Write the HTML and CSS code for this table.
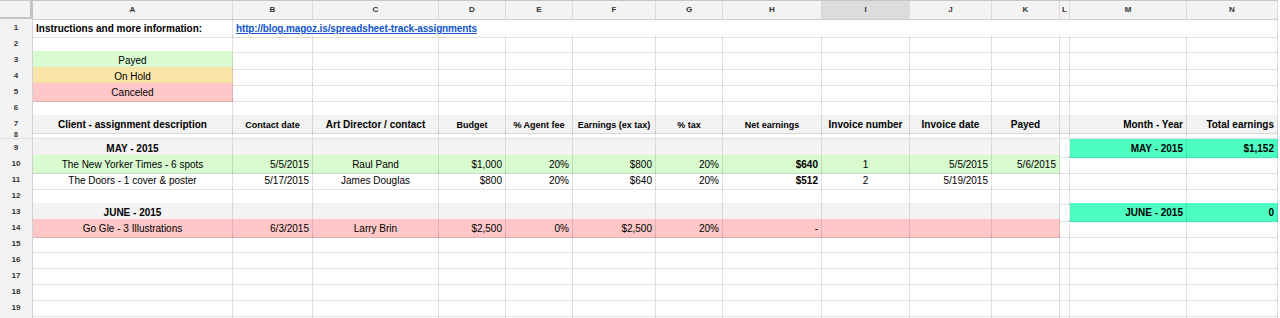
FILE: index.html
```html
<!DOCTYPE html>
<html>
<head>
<meta charset="utf-8">
<link rel="stylesheet" href="styles.css">
</head>
<body>
<div class="sheet">
  <div class="row hdr">
    <div class="corner"></div>
    <div class="ch">A</div><div class="ch">B</div><div class="ch">C</div><div class="ch">D</div><div class="ch">E</div><div class="ch">F</div><div class="ch">G</div><div class="ch">H</div><div class="ch sel">I</div><div class="ch">J</div><div class="ch">K</div><div class="ch">L</div><div class="ch">M</div><div class="ch">N</div>
  </div>

  <div class="row">
    <div class="rh">1</div>
    <div class="c b">Instructions and more information:</div>
    <div class="c span-rest"><a class="link" href="#">http://blog.magoz.is/spreadsheet-track-assignments</a></div>
  </div>

  <div class="row">
    <div class="rh">2</div>
    <div class="c"></div><div class="c"></div><div class="c"></div><div class="c"></div><div class="c"></div><div class="c"></div><div class="c"></div><div class="c"></div><div class="c"></div><div class="c"></div><div class="c"></div><div class="c"></div><div class="c"></div><div class="c"></div>
  </div>

  <div class="row">
    <div class="rh">3</div>
    <div class="c ctr ok">Payed</div><div class="c"></div><div class="c"></div><div class="c"></div><div class="c"></div><div class="c"></div><div class="c"></div><div class="c"></div><div class="c"></div><div class="c"></div><div class="c"></div><div class="c"></div><div class="c"></div><div class="c"></div>
  </div>

  <div class="row">
    <div class="rh">4</div>
    <div class="c ctr hold">On Hold</div><div class="c"></div><div class="c"></div><div class="c"></div><div class="c"></div><div class="c"></div><div class="c"></div><div class="c"></div><div class="c"></div><div class="c"></div><div class="c"></div><div class="c"></div><div class="c"></div><div class="c"></div>
  </div>

  <div class="row">
    <div class="rh">5</div>
    <div class="c ctr cx">Canceled</div><div class="c"></div><div class="c"></div><div class="c"></div><div class="c"></div><div class="c"></div><div class="c"></div><div class="c"></div><div class="c"></div><div class="c"></div><div class="c"></div><div class="c"></div><div class="c"></div><div class="c"></div>
  </div>

  <div class="row">
    <div class="rh">6</div>
    <div class="c"></div><div class="c"></div><div class="c"></div><div class="c"></div><div class="c"></div><div class="c"></div><div class="c"></div><div class="c"></div><div class="c"></div><div class="c"></div><div class="c"></div><div class="c"></div><div class="c"></div><div class="c"></div>
  </div>

  <div class="row">
    <div class="rh">7</div>
    <div class="c g b ctr">Client - assignment description</div>
    <div class="c g b sm ctr">Contact date</div>
    <div class="c g b ctr">Art Director / contact</div>
    <div class="c g b sm ctr">Budget</div>
    <div class="c g b sm ctr">% Agent fee</div>
    <div class="c g b sm ctr">Earnings (ex tax)</div>
    <div class="c g b sm ctr">% tax</div>
    <div class="c g b sm ctr">Net earnings</div>
    <div class="c g b ctr">Invoice number</div>
    <div class="c g b ctr">Invoice date</div>
    <div class="c g b ctr">Payed</div>
    <div class="c g"></div>
    <div class="c g b r">Month - Year</div>
    <div class="c g b r">Total earnings</div>
  </div>

  <div class="row short">
    <div class="rh tiny">8</div>
    <div class="c"></div><div class="c"></div><div class="c"></div><div class="c"></div><div class="c"></div><div class="c"></div><div class="c"></div><div class="c"></div><div class="c"></div><div class="c"></div><div class="c"></div><div class="c"></div><div class="c"></div><div class="c"></div>
  </div>

  <div class="row">
    <div class="rh">9</div>
    <div class="c g b ctr">MAY - 2015</div><div class="c g"></div><div class="c g"></div><div class="c g"></div><div class="c g"></div><div class="c g"></div><div class="c g"></div><div class="c g"></div><div class="c g"></div><div class="c g"></div><div class="c g"></div>
    <div class="c"></div>
    <div class="c tl b r">MAY - 2015</div>
    <div class="c tl b r">$1,152</div>
  </div>

  <div class="row">
    <div class="rh">10</div>
    <div class="c ok ctr">The New Yorker Times - 6 spots</div>
    <div class="c ok r">5/5/2015</div>
    <div class="c ok ctr">Raul Pand</div>
    <div class="c ok r">$1,000</div>
    <div class="c ok r">20%</div>
    <div class="c ok r">$800</div>
    <div class="c ok r">20%</div>
    <div class="c ok r b">$640</div>
    <div class="c ok ctr">1</div>
    <div class="c ok r">5/5/2015</div>
    <div class="c ok r">5/6/2015</div>
    <div class="c"></div><div class="c"></div><div class="c"></div>
  </div>

  <div class="row">
    <div class="rh">11</div>
    <div class="c ctr">The Doors - 1 cover &amp; poster</div>
    <div class="c r">5/17/2015</div>
    <div class="c ctr">James Douglas</div>
    <div class="c r">$800</div>
    <div class="c r">20%</div>
    <div class="c r">$640</div>
    <div class="c r">20%</div>
    <div class="c r b">$512</div>
    <div class="c ctr">2</div>
    <div class="c r">5/19/2015</div>
    <div class="c"></div>
    <div class="c"></div><div class="c"></div><div class="c"></div>
  </div>

  <div class="row">
    <div class="rh">12</div>
    <div class="c"></div><div class="c"></div><div class="c"></div><div class="c"></div><div class="c"></div><div class="c"></div><div class="c"></div><div class="c"></div><div class="c"></div><div class="c"></div><div class="c"></div><div class="c"></div><div class="c"></div><div class="c"></div>
  </div>

  <div class="row">
    <div class="rh">13</div>
    <div class="c g b ctr">JUNE - 2015</div><div class="c g"></div><div class="c g"></div><div class="c g"></div><div class="c g"></div><div class="c g"></div><div class="c g"></div><div class="c g"></div><div class="c g"></div><div class="c g"></div><div class="c g"></div>
    <div class="c"></div>
    <div class="c tl b r">JUNE - 2015</div>
    <div class="c tl b r">0</div>
  </div>

  <div class="row">
    <div class="rh">14</div>
    <div class="c cx ctr">Go Gle - 3 Illustrations</div>
    <div class="c cx r">6/3/2015</div>
    <div class="c cx ctr">Larry Brin</div>
    <div class="c cx r">$2,500</div>
    <div class="c cx r">0%</div>
    <div class="c cx r">$2,500</div>
    <div class="c cx r">20%</div>
    <div class="c cx r">-</div>
    <div class="c cx"></div>
    <div class="c cx"></div>
    <div class="c cx"></div>
    <div class="c"></div><div class="c"></div><div class="c"></div>
  </div>

  <div class="row">
    <div class="rh">15</div>
    <div class="c"></div><div class="c"></div><div class="c"></div><div class="c"></div><div class="c"></div><div class="c"></div><div class="c"></div><div class="c"></div><div class="c"></div><div class="c"></div><div class="c"></div><div class="c"></div><div class="c"></div><div class="c"></div>
  </div>
  <div class="row">
    <div class="rh">16</div>
    <div class="c"></div><div class="c"></div><div class="c"></div><div class="c"></div><div class="c"></div><div class="c"></div><div class="c"></div><div class="c"></div><div class="c"></div><div class="c"></div><div class="c"></div><div class="c"></div><div class="c"></div><div class="c"></div>
  </div>
  <div class="row">
    <div class="rh">17</div>
    <div class="c"></div><div class="c"></div><div class="c"></div><div class="c"></div><div class="c"></div><div class="c"></div><div class="c"></div><div class="c"></div><div class="c"></div><div class="c"></div><div class="c"></div><div class="c"></div><div class="c"></div><div class="c"></div>
  </div>
  <div class="row">
    <div class="rh">18</div>
    <div class="c"></div><div class="c"></div><div class="c"></div><div class="c"></div><div class="c"></div><div class="c"></div><div class="c"></div><div class="c"></div><div class="c"></div><div class="c"></div><div class="c"></div><div class="c"></div><div class="c"></div><div class="c"></div>
  </div>
  <div class="row">
    <div class="rh">19</div>
    <div class="c"></div><div class="c"></div><div class="c"></div><div class="c"></div><div class="c"></div><div class="c"></div><div class="c"></div><div class="c"></div><div class="c"></div><div class="c"></div><div class="c"></div><div class="c"></div><div class="c"></div><div class="c"></div>
  </div>
  <div class="row">
    <div class="rh"></div>
    <div class="c"></div><div class="c"></div><div class="c"></div><div class="c"></div><div class="c"></div><div class="c"></div><div class="c"></div><div class="c"></div><div class="c"></div><div class="c"></div><div class="c"></div><div class="c"></div><div class="c"></div><div class="c"></div>
  </div>
</div>
</body>
</html>
```

FILE: styles.css
```css
html, body {
  margin: 0;
  padding: 0;
  background: #ffffff;
}

body {
  font-family: "Liberation Sans", Arial, sans-serif;
  color: #000;
  width: 1280px;
  height: 318px;
  overflow: hidden;
}

.sheet {
  display: flex;
  flex-direction: column;
}

.row {
  display: grid;
  grid-template-columns: 33px 200px 80px 126px 67px 67px 83px 67px 99px 88px 82px 68px 10px 117px 91px;
  height: 16px;
}

.row.hdr {
  height: 19px;
}

.row.short {
  height: 8px;
}

/* column header row */
.corner {
  box-sizing: border-box;
  background: #f3f3f3;
  border-top: 1px solid #c6c6c6;
  border-right: 3px solid #c4c4c4;
  border-bottom: 3px solid #c4c4c4;
}

.ch {
  box-sizing: border-box;
  background: #f3f3f3;
  border-top: 1px solid #c6c6c6;
  border-right: 1px solid #dadada;
  border-bottom: 1px solid #cfcfcf;
  font-size: 8px;
  font-weight: bold;
  color: #333;
  text-align: center;
  line-height: 18px;
}

.ch.sel {
  background: #dcdcdc;
}

/* row header */
.rh {
  box-sizing: border-box;
  background: #f3f3f3;
  border-right: 1px solid #d2d2d2;
  border-bottom: 1px solid #e0e0e0;
  font-size: 8px;
  font-weight: bold;
  color: #333;
  text-align: center;
  line-height: 17px;
}

.rh.tiny {
  line-height: 7px;
  font-size: 7px;
}

/* cells */
.c {
  box-sizing: border-box;
  border-right: 1px solid rgba(0, 0, 0, 0.11);
  border-bottom: 1px solid rgba(0, 0, 0, 0.11);
  font-size: 10px;
  line-height: 16px;
  padding: 2px 3px 0 3px;
  white-space: nowrap;
  overflow: visible;
}

.span-rest {
  grid-column: span 13;
}

.b { font-weight: bold; }
.sm { font-size: 9px; }
.ctr { text-align: center; }
.r { text-align: right; }

.g { background: #f3f3f3; }
.ok { background: #d8fcd0; }
.hold { background: #f9e4a7; }
.cx { background: #ffc7c7; }
.tl {
  background: #4cffc0;
  border-color: rgba(0, 120, 70, 0.16);
}

.link {
  color: #1155cc;
  font-weight: bold;
  text-decoration: underline;
  letter-spacing: -0.14px;
}
```
